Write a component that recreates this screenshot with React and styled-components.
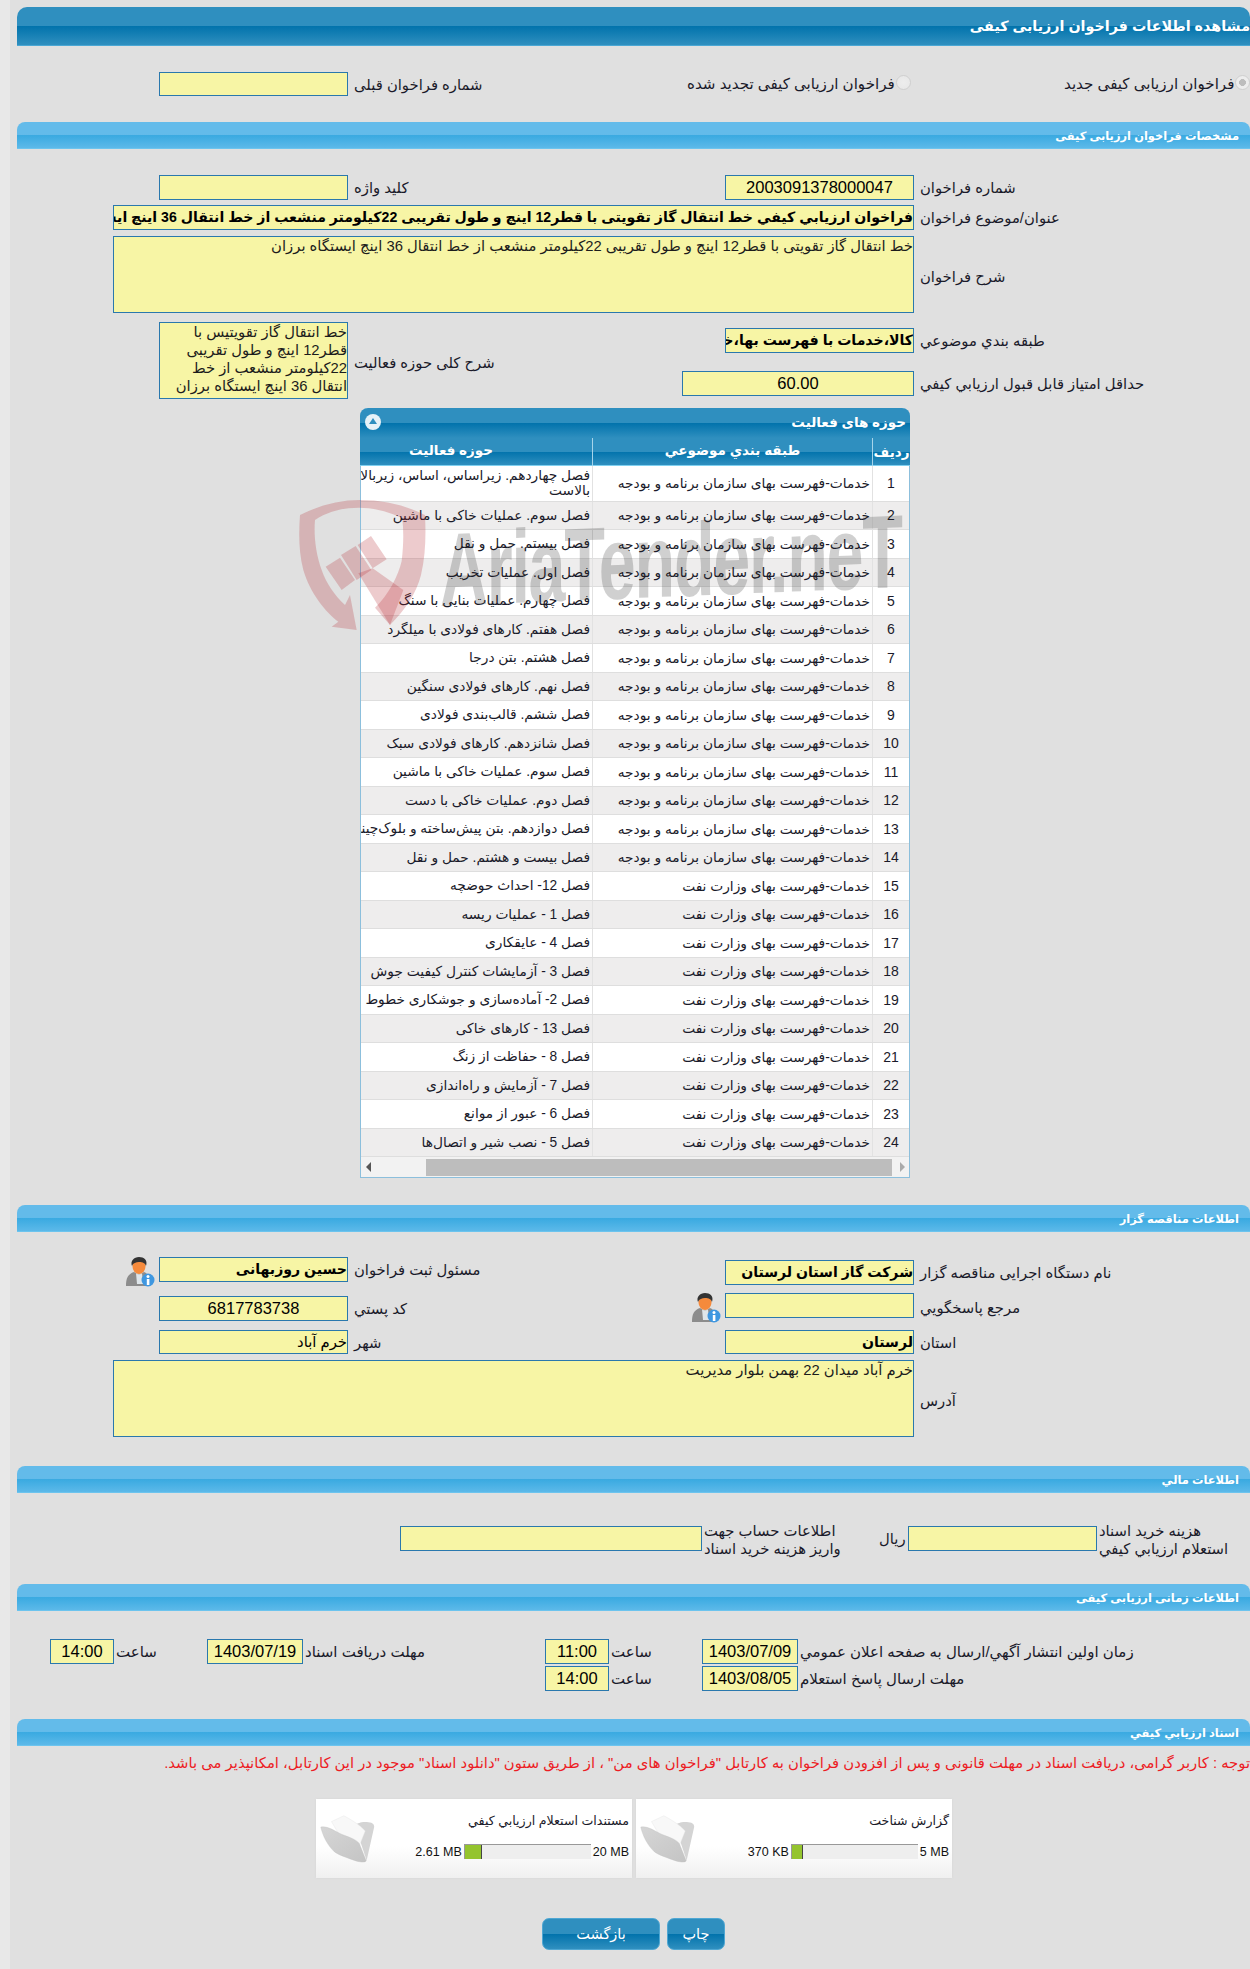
import React from 'react';
import styled, { createGlobalStyle } from 'styled-components';

const FONT = `"Liberation Sans", "DejaVu Sans", sans-serif`;

const rows = [
    ['خدمات-فهرست بهای سازمان برنامه و بودجه', 'فصل\u00A0چهاردهم.\u00A0زیراساس،\u00A0اساس،\u00A0زیربالا بالاست'],
    ['خدمات-فهرست بهای سازمان برنامه و بودجه', 'فصل سوم. عملیات خاکی با ماشین'],
    ['خدمات-فهرست بهای سازمان برنامه و بودجه', 'فصل بیستم. حمل و نقل'],
    ['خدمات-فهرست بهای سازمان برنامه و بودجه', 'فصل اول. عملیات تخریب'],
    ['خدمات-فهرست بهای سازمان برنامه و بودجه', 'فصل چهارم. عملیات بنایی با سنگ'],
    ['خدمات-فهرست بهای سازمان برنامه و بودجه', 'فصل هفتم. کارهای فولادی با میلگرد'],
    ['خدمات-فهرست بهای سازمان برنامه و بودجه', 'فصل هشتم. بتن درجا'],
    ['خدمات-فهرست بهای سازمان برنامه و بودجه', 'فصل نهم. کارهای فولادی سنگین'],
    ['خدمات-فهرست بهای سازمان برنامه و بودجه', 'فصل ششم. قالب‌بندی فولادی'],
    ['خدمات-فهرست بهای سازمان برنامه و بودجه', 'فصل شانزدهم. کارهای فولادی سبک'],
    ['خدمات-فهرست بهای سازمان برنامه و بودجه', 'فصل سوم. عملیات خاکی با ماشین'],
    ['خدمات-فهرست بهای سازمان برنامه و بودجه', 'فصل دوم. عملیات خاکی با دست'],
    ['خدمات-فهرست بهای سازمان برنامه و بودجه', 'فصل دوازدهم. بتن پیش‌ساخته و بلوک‌چینی'],
    ['خدمات-فهرست بهای سازمان برنامه و بودجه', 'فصل بیست و هشتم. حمل و نقل'],
    ['خدمات-فهرست بهای وزارت نفت', 'فصل 12- احداث حوضچه'],
    ['خدمات-فهرست بهای وزارت نفت', 'فصل 1 - عملیات ریسه'],
    ['خدمات-فهرست بهای وزارت نفت', 'فصل 4 - عایقکاری'],
    ['خدمات-فهرست بهای وزارت نفت', 'فصل 3 - آزمایشات کنترل کیفیت جوش'],
    ['خدمات-فهرست بهای وزارت نفت', 'فصل 2- آماده‌سازی و جوشکاری خطوط لوله'],
    ['خدمات-فهرست بهای وزارت نفت', 'فصل 13 - کارهای خاکی'],
    ['خدمات-فهرست بهای وزارت نفت', 'فصل 8 - حفاظت از زنگ'],
    ['خدمات-فهرست بهای وزارت نفت', 'فصل 7 - آزمایش و راه‌اندازی'],
    ['خدمات-فهرست بهای وزارت نفت', 'فصل 6 - عبور از موانع'],
    ['خدمات-فهرست بهای وزارت نفت', 'فصل 5 - نصب شیر و اتصال‌ها'],
];

function PersonIcon() {
    return (
        <svg width="29" height="30" viewBox="0 0 29 30">
            <path d="M0 29c0-8 2-12 8-14l5 3 5-3c3 1 5 4 5 8v6z" fill="#8c8c8c" />
            <path d="M10 16l3 2 3-2 1 11h-6z" fill="#dfe6ea" />
            <ellipse cx="13" cy="9.500" rx="6.500" ry="7.500" fill="#f58a3c" />
            <path d="M6 9C4 4 8 0 13 0s9 3 7 9c-1-3-3-4-7-4-3 0-6 1-7 4z" fill="#333" />
            <circle cx="22" cy="23" r="6.500" fill="#3f97e0" />
            <rect x="20.800" y="22" width="2.600" height="6" fill="#fff" />
            <circle cx="22" cy="19.500" r="1.500" fill="#fff" />
        </svg>
    );
}

function FolderIcon() {
    return (
        <svg width="57" height="50" viewBox="30 70 165 145">
            <defs>
                <linearGradient id="folderFront" x1="0" y1="0" x2="1" y2="1">
                    <stop offset="0" stopColor="#d6d6d6" />
                    <stop offset="1" stopColor="#c4c4c4" />
                </linearGradient>
            </defs>
            <path d="M135 100c8-2 14-7 28-7 14 0 27 2 27 14l-22 98-20-60z" fill="#d4d4d4" />
            <path d="M66 92l36-17c22 12 46 26 62 44l-16 40-60-30z" fill="#f8f8f8" stroke="#e2e2e2" />
            <path d="M35 108c16-4 36 8 54 18 20 9 48 16 58 30l20 50c-6 6-18 3-30 0-22-8-48-16-62-26-20-18-34-46-40-72z" fill="url(#folderFront)" stroke="#bfbfbf" />
        </svg>
    );
}

function Watermark() {
    return (
        <MarkWrap aria-hidden="true">
            <svg width="150" height="160" viewBox="0 0 450 480">
                <g fill="#b5252f" fillOpacity="0.24">
                    <path d="M30 75C90 45 150 30 210 30c70 0 135 15 195 45 3 60 2 120-12 180-14 55-48 105-93 150l-45-52c40-38 70-95 80-140 6-50 6-90 2-128-45-22-90-32-130-32-48 0-95 12-132 37-4 45 2 100 20 150 14 40 38 75 70 105l15-30 20 105-75-10 20-15C110 370 60 310 40 240 26 185 26 130 30 75z" />
                    <path d="M107 230l43-27 45 67-40 30zM153 195l44-27 47 72-44 30zM203 165l40-27 47 70-42 27z" />
                    <path d="M205 250l43-15 92 65-40 105z" />
                </g>
            </svg>
            <MarkText>AriaTender.neT</MarkText>
        </MarkWrap>
    );
}

function Label({ children, low }) {
    return <FieldLabel dir="rtl" $low={low}>{children}</FieldLabel>;
}

export default function App() {
    return (
        <>
            <GlobalStyle />
            <Page>
                <MainHeader dir="rtl">مشاهده اطلاعات فراخوان ارزیابی کیفی</MainHeader>

                <TwoCols $top={26}>
                    <Field>
                        <span />
                        <Box $short />
                        <Label>شماره فراخوان قبلی</Label>
                    </Field>
                    <RadioRow>
                        <RadioOption $width={377}>
                            <Radio />
                            <RadioText dir="rtl">فراخوان ارزیابی کیفی تجدید شده</RadioText>
                        </RadioOption>
                        <RadioOption>
                            <Radio $checked />
                            <RadioText dir="rtl">فراخوان ارزیابی کیفی جدید</RadioText>
                        </RadioOption>
                    </RadioRow>
                </TwoCols>

                <SectionHeader $top={26} dir="rtl">مشخصات فراخوان ارزیابی کیفی</SectionHeader>

                <TwoCols $top={26}>
                    <Field>
                        <span />
                        <Box />
                        <Label>کلید واژه</Label>
                    </Field>
                    <Field>
                        <span />
                        <Box $center>2003091378000047</Box>
                        <Label>شماره فراخوان</Label>
                    </Field>
                </TwoCols>

                <WideField $top={5}>
                    <Box $bold dir="rtl">فراخوان ارزيابي كيفي خط انتقال گاز تقویتی  با قطر12 اینچ و طول تقریبی 22کیلومتر منشعب از خط انتقال 36 اینچ ایستگاه برزان</Box>
                    <Label>عنوان/موضوع فراخوان</Label>
                </WideField>

                <WideField $top={6}>
                    <TextBox dir="rtl">خط انتقال گاز تقویتی با قطر12 اینچ و طول تقریبی 22کیلومتر منشعب از خط انتقال 36 اینچ ایستگاه برزان</TextBox>
                    <Label low>شرح فراخوان</Label>
                </WideField>

                <DetailSplit>
                    <Field>
                        <span />
                        <TextBox dir="rtl">خط انتقال گاز تقویتیس با قطر12 اینچ و طول تقریبی 22کیلومتر منشعب از خط انتقال 36 اینچ ایستگاه برزان</TextBox>
                        <Label low>شرح کلی حوزه فعالیت</Label>
                    </Field>
                    <ScoreCol>
                        <ScoreField>
                            <Box $bold $width={189} dir="rtl">كالا،خدمات با فهرست بها،خدمات</Box>
                            <Label>طبقه بندي موضوعي</Label>
                        </ScoreField>
                        <ScoreField>
                            <Box $center>60.00</Box>
                            <Label>حداقل امتياز قابل قبول ارزيابي كيفي</Label>
                        </ScoreField>
                    </ScoreCol>
                </DetailSplit>

                <GridPanel dir="rtl">
                    <GridTitle>
                        حوزه های فعالیت
                        <Collapse />
                    </GridTitle>
                    <GridHead>
                        <HeadCell>ردیف</HeadCell>
                        <HeadCell>طبقه بندي موضوعي</HeadCell>
                        <HeadCell>حوزه فعالیت</HeadCell>
                    </GridHead>
                    {rows.map(([category, activity], i) => (
                        <GridRow key={i} $odd={i % 2 === 1} $tall={i === 0}>
                            <NumCell>{i + 1}</NumCell>
                            <Cell>{category}</Cell>
                            <ActivityCell $wrap={i === 0}>{activity}</ActivityCell>
                        </GridRow>
                    ))}
                    <ScrollBar dir="ltr">
                        <ScrollArrow $left />
                        <ScrollThumb />
                        <ScrollArrow />
                    </ScrollBar>
                    <Watermark />
                </GridPanel>

                <SectionHeader $top={27} dir="rtl">اطلاعات مناقصه گزار</SectionHeader>

                <TwoCols $top={0}>
                    <FieldStack $top={25}>
                        <Field $gapAfter={14}>
                            <IconSlot><PersonIcon /></IconSlot>
                            <Box $bold dir="rtl">حسین روزبهانی</Box>
                            <Label>مسئول ثبت فراخوان</Label>
                        </Field>
                        <Field $gapAfter={9}>
                            <span />
                            <Box $center>6817783738</Box>
                            <Label>کد پستي</Label>
                        </Field>
                        <Field>
                            <span />
                            <Box $short $plain dir="rtl">خرم آباد</Box>
                            <Label>شهر</Label>
                        </Field>
                    </FieldStack>
                    <FieldStack $top={28}>
                        <Field $gapAfter={8}>
                            <span />
                            <Box $bold dir="rtl">شرکت گاز استان لرستان</Box>
                            <Label>نام دستگاه اجرایی مناقصه گزار</Label>
                        </Field>
                        <Field $gapAfter={12}>
                            <IconSlot><PersonIcon /></IconSlot>
                            <Box />
                            <Label low>مرجع پاسخگويي</Label>
                        </Field>
                        <Field>
                            <span />
                            <Box $short $bold dir="rtl">لرستان</Box>
                            <Label>استان</Label>
                        </Field>
                    </FieldStack>
                </TwoCols>

                <WideField $top={6}>
                    <TextBox dir="rtl">خرم آباد میدان 22 بهمن بلوار مدیریت</TextBox>
                    <Label low>آدرس</Label>
                </WideField>

                <SectionHeader $top={29} dir="rtl">اطلاعات مالي</SectionHeader>

                <FinanceRow>
                    <Box />
                    <TwoLineLabel dir="rtl">اطلاعات حساب جهت<br />واریز هزینه خرید اسناد</TwoLineLabel>
                    <Rial dir="rtl">ریال</Rial>
                    <Box />
                    <TwoLineLabel dir="rtl">هزينه خريد اسناد<br />استعلام ارزيابي كيفي</TwoLineLabel>
                </FinanceRow>

                <SectionHeader $top={33} dir="rtl">اطلاعات زمانی ارزیابی کیفی</SectionHeader>

                <TimeGrid>
                    <Box $center>14:00</Box>
                    <TimeLabel dir="rtl">ساعت</TimeLabel>
                    <Box $center>1403/07/19</Box>
                    <TimeLabel dir="rtl">مهلت دریافت اسناد</TimeLabel>
                    <Box $center>11:00</Box>
                    <TimeLabel dir="rtl">ساعت</TimeLabel>
                    <Box $center>1403/07/09</Box>
                    <TimeLabel dir="rtl">زمان اولین انتشار آگهي/ارسال به صفحه اعلان عمومي</TimeLabel>
                    <SecondTime $center>14:00</SecondTime>
                    <TimeLabel dir="rtl">ساعت</TimeLabel>
                    <Box $center>1403/08/05</Box>
                    <TimeLabel dir="rtl">مهلت ارسال پاسخ استعلام</TimeLabel>
                </TimeGrid>

                <SectionHeader $top={28} dir="rtl">اسناد ارزيابي كيفي</SectionHeader>

                <Notice dir="rtl">توجه : کاربر گرامی، دریافت اسناد در مهلت قانونی و پس از افزودن فراخوان به کارتابل "فراخوان های من" ، از طریق ستون "دانلود اسناد" موجود در این کارتابل، امکانپذیر می باشد.</Notice>

                <Cards>
                    <DocCard>
                        <FolderIcon />
                        <CardBody>
                            <CardTitle dir="rtl">مستندات استعلام ارزيابي كيفي</CardTitle>
                            <Usage>
                                <UsageText>2.61 MB</UsageText>
                                <Meter><MeterFill style={{ width: '14%' }} /></Meter>
                                <UsageText>20 MB</UsageText>
                            </Usage>
                        </CardBody>
                    </DocCard>
                    <DocCard>
                        <FolderIcon />
                        <CardBody>
                            <CardTitle dir="rtl">گزارش شناخت</CardTitle>
                            <Usage>
                                <UsageText>370 KB</UsageText>
                                <Meter><MeterFill style={{ width: '9%' }} /></Meter>
                                <UsageText>5 MB</UsageText>
                            </Usage>
                        </CardBody>
                    </DocCard>
                </Cards>

                <Buttons>
                    <ActionButton $width={118}>بازگشت</ActionButton>
                    <ActionButton $width={58}>چاپ</ActionButton>
                </Buttons>
            </Page>
        </>
    );
}

const GlobalStyle = createGlobalStyle`
    html, body {
        margin: 0;
        padding: 0;
        background: #e0e0e0;
        overflow: hidden;
    }
    body {
        font-family: ${FONT};
        color: #1a1a2a;
    }
    * {
        box-sizing: border-box;
    }
`;

const BLUE_BAR = `linear-gradient(#2f8fbf 0%, #2f8fbf 50%, #0273ac 51%, #2f8fbf 100%)`;
const LIGHT_BAR = `linear-gradient(#63bbea 0%, #63bbea 48%, #3aaae1 52%, #5cb9e9 100%)`;

const Page = styled.div`
    width: 1250px;
    height: 1969px;
    padding: 7px 0 0 17px;
    overflow: hidden;
    position: relative;
    background: linear-gradient(90deg, #e8e8e8 10px, #e0e0e0 10px);
`;

const MainHeader = styled.div`
    height: 39px;
    background: ${BLUE_BAR};
    border-radius: 10px 10px 0 0;
    border-bottom: 1px solid #4aa7d4;
    color: #fff;
    font-size: 14.300px;
    font-weight: bold;
    line-height: 38px;
    white-space: nowrap;
`;

const SectionHeader = styled.div`
    height: 27px;
    margin-top: ${(p) => p.$top}px;
    background: ${LIGHT_BAR};
    border-radius: 8px 8px 0 0;
    border-bottom: 1px solid #6cc4ee;
    color: #fff;
    font-size: 11.450px;
    font-weight: bold;
    line-height: 29px;
    padding-right: 11px;
    white-space: nowrap;
`;

const TwoCols = styled.div`
    display: grid;
    grid-template-columns: 566px 1fr;
    margin-top: ${(p) => p.$top}px;
`;

const Field = styled.div`
    display: grid;
    grid-template-columns: 142px 189px 1fr;
    align-items: center;
    margin-bottom: ${(p) => p.$gapAfter || 0}px;
`;

const FieldStack = styled.div`
    padding-top: ${(p) => p.$top}px;
`;

const IconSlot = styled.div`
    display: flex;
    justify-content: flex-end;
    align-items: flex-start;
    height: 25px;
    padding-right: 4px;
    svg {
        flex: none;
    }
`;

const Box = styled.div`
    width: ${(p) => (p.$width ? `${p.$width}px` : '100%')};
    height: ${(p) => (p.$short ? 24 : 25)}px;
    justify-self: end;
    background: #f7f5a5;
    border: 1px solid #2a78ad;
    overflow: hidden;
    white-space: nowrap;
    color: #000;
    font-size: ${(p) => (p.$bold ? 14.1 : p.$plain ? 14.8 : 16.5)}px;
    font-weight: ${(p) => (p.$bold ? 'bold' : 'normal')};
    line-height: 23px;
    text-align: ${(p) => (p.$center ? 'center' : 'right')};
`;

const FieldLabel = styled.div`
    padding: ${(p) => (p.$low ? 3 : 0)}px 0 0 6px;
    font-size: 14.800px;
    text-align: left;
    white-space: nowrap;
`;

const RadioRow = styled.div`
    display: flex;
    align-items: center;
    padding-left: 104px;
    height: 24px;
`;

const RadioOption = styled.div`
    display: flex;
    flex-direction: row-reverse;
    justify-content: flex-end;
    align-items: center;
    width: ${(p) => (p.$width ? `${p.$width}px` : 'auto')};
    height: 24px;
    flex: none;
`;

const Radio = styled.span`
    width: 15px;
    height: 15px;
    margin-top: -4px;
    margin-left: 1px;
    border-radius: 50%;
    background: radial-gradient(${(p) => (p.$checked ? '#bdbdbd 0 35%, #ededed 40%' : '#ededed, #e6e6e6')});
    border: 1px solid #cfcfcf;
    flex: none;
`;

const RadioText = styled.span`
    font-size: 15.100px;
    white-space: nowrap;
`;

const WideField = styled.div`
    display: grid;
    grid-template-columns: 801px 1fr;
    align-items: center;
    margin: ${(p) => p.$top}px 0 0 96px;
`;

const TextBox = styled.div`
    height: 77px;
    background: #f7f5a5;
    border: 1px solid #2a78ad;
    color: #1c1c1c;
    font-size: 14.800px;
    line-height: 18px;
    text-align: right;
    overflow: hidden;
`;

const DetailSplit = styled.div`
    display: grid;
    grid-template-columns: 665px 1fr;
    margin-top: 9px;
`;

const ScoreCol = styled.div`
    display: flex;
    flex-direction: column;
    gap: 18px;
    padding-top: 6px;
`;

const ScoreField = styled.div`
    display: grid;
    grid-template-columns: 232px 1fr;
    align-items: center;
`;

const GridPanel = styled.div`
    position: relative;
    width: 550px;
    margin: 9px 0 0 343px;
    background: #fff;
    border-radius: 8px 8px 0 0;
    border-left: 1px solid #8cbfdc;
    border-right: 1px solid #8cbfdc;
    border-bottom: 1px solid #8cbfdc;
`;

const GridTitle = styled.div`
    display: flex;
    justify-content: space-between;
    align-items: center;
    height: 30px;
    margin: 0 -1px;
    padding: 0 4px 2px 5px;
    background: ${BLUE_BAR};
    border-radius: 8px 8px 0 0;
    color: #fff;
    font-size: 13.500px;
    font-weight: bold;
`;

const Collapse = styled.span`
    position: relative;
    width: 16px;
    height: 16px;
    border-radius: 50%;
    background: #e6f2f8;
    &::after {
        content: '';
        position: absolute;
        left: 4px;
        top: 4px;
        border: 4px solid transparent;
        border-bottom: 6px solid #2f8fbf;
        border-top: 0;
    }
`;

const GridHead = styled.div`
    display: grid;
    grid-template-columns: 38px 280px 232px;
    height: 28px;
    margin: 0 -1px;
    background: ${BLUE_BAR};
    border-bottom: 1px solid #7fd0f0;
`;

const HeadCell = styled.div`
    border-left: 1px solid #a6d4ea;
    color: #fff;
    font-size: 13.500px;
    font-weight: bold;
    line-height: 25px;
    text-align: center;
    white-space: nowrap;
    &:first-child {
        line-height: 29px;
    }
    &:last-child {
        border-left: 0;
        padding-right: 50px;
    }
`;

const GridRow = styled.div`
    display: grid;
    grid-template-columns: 37px 280px 231px;
    height: ${(p) => (p.$tall ? '35.5px' : '28.5px')};
    background: ${(p) => (p.$odd ? '#eeeded' : '#fff')};
    border-bottom: 1px solid #dedede;
`;

const Cell = styled.div`
    display: flex;
    align-items: center;
    padding-right: 2px;
    border-left: 1px solid #e2e2e2;
    font-size: 13.750px;
    white-space: nowrap;
    overflow: hidden;
`;

const NumCell = styled(Cell)`
    justify-content: center;
    font-size: 14px;
    padding-right: 0;
`;

const ActivityCell = styled(Cell)`
    border-left: 0;
    white-space: ${(p) => (p.$wrap ? 'normal' : 'nowrap')};
    line-height: 15px;
`;

const ScrollBar = styled.div`
    display: flex;
    align-items: center;
    height: 20px;
    padding: 0 0 0 5px;
    background: #f2f2f2;
`;

const ScrollArrow = styled.span`
    flex: none;
    width: 0;
    height: 0;
    margin: ${(p) => (p.$left ? '0 55px 0 0' : '0 0 0 8px')};
    border: 5px solid transparent;
    ${(p) => (p.$left ? 'border-right-color: #555; border-left: 0;' : 'border-left-color: #aaa; border-right: 0;')}
`;

const ScrollThumb = styled.span`
    width: 466px;
    height: 17px;
    background: #bdbdbd;
`;

const MarkWrap = styled.div`
    position: absolute;
    left: -71px;
    top: 82px;
    display: flex;
    align-items: flex-start;
    pointer-events: none;
    direction: ltr;
    svg {
        flex: none;
    }
`;

const MarkText = styled.span`
    margin-top: 28px;
    color: rgba(40, 40, 40, 0.22);
    font-size: 104px;
    font-weight: bold;
    font-family: "Liberation Sans Narrow", "Liberation Sans", sans-serif;
    letter-spacing: -2px;
    line-height: 1;
    white-space: nowrap;
    transform: scaleX(0.64) skewY(-1.500deg);
    transform-origin: left top;
`;

const FinanceRow = styled.div`
    display: grid;
    grid-template-columns: 302px 177px 29px 189px 1fr;
    grid-template-rows: 25px;
    align-items: center;
    margin: 33px 0 0 383px;
    height: 25px;
`;

const TwoLineLabel = styled.div`
    padding: 3px 0 0 2px;
    font-size: 14.800px;
    line-height: 18px;
    text-align: left;
    white-space: nowrap;
`;

const Rial = styled.div`
    font-size: 14.800px;
    text-align: left;
`;

const TimeGrid = styled.div`
    display: grid;
    grid-template-columns: 64px 93px 96px 242px 64px 93px 96px 1fr;
    grid-template-rows: 25px 25px;
    row-gap: 2px;
    align-items: center;
    margin: 28px 0 0 33px;
`;

const TimeLabel = styled.div`
    padding-left: 2px;
    font-size: 15px;
    text-align: left;
    white-space: nowrap;
`;

const SecondTime = styled(Box)`
    grid-column: 5;
`;

const Notice = styled.div`
    height: 53px;
    padding-top: 9px;
    color: #ec1c24;
    font-size: 14.800px;
    white-space: nowrap;
    line-height: 17px;
`;

const Cards = styled.div`
    display: flex;
    gap: 4px;
    margin-left: 299px;
`;

const DocCard = styled.div`
    display: flex;
    width: 316px;
    height: 79px;
    padding: 15px 3px 0 3px;
    background: linear-gradient(#fff 60%, #f0f0f0);
    box-shadow: 0 0 2px #d4d4d4;
    svg {
        flex: none;
    }
`;

const CardBody = styled.div`
    flex: 1;
`;

const CardTitle = styled.div`
    margin-top: -1px;
    font-size: 12.600px;
    text-align: right;
    white-space: nowrap;
`;

const Usage = styled.div`
    display: flex;
    justify-content: flex-end;
    align-items: center;
    gap: 2px;
    margin-top: 16px;
`;

const UsageText = styled.span`
    font-size: 12.500px;
    color: #111;
    white-space: nowrap;
`;

const Meter = styled.div`
    width: 127px;
    height: 15px;
    background: #eee;
    border-top: 1px solid #999;
    border-left: 1px solid #999;
`;

const MeterFill = styled.div`
    height: 100%;
    background: #94c42e;
    border-right: 1px solid #444;
`;

const Buttons = styled.div`
    display: flex;
    gap: 7px;
    margin: 40px 0 0 525px;
`;

const ActionButton = styled.button`
    width: ${(p) => p.$width}px;
    height: 32px;
    padding: 0;
    background: ${BLUE_BAR};
    border: 1px solid #4fa7d3;
    border-radius: 7px;
    color: #fff;
    font-family: ${FONT};
    font-size: 14.500px;
    cursor: pointer;
`;
